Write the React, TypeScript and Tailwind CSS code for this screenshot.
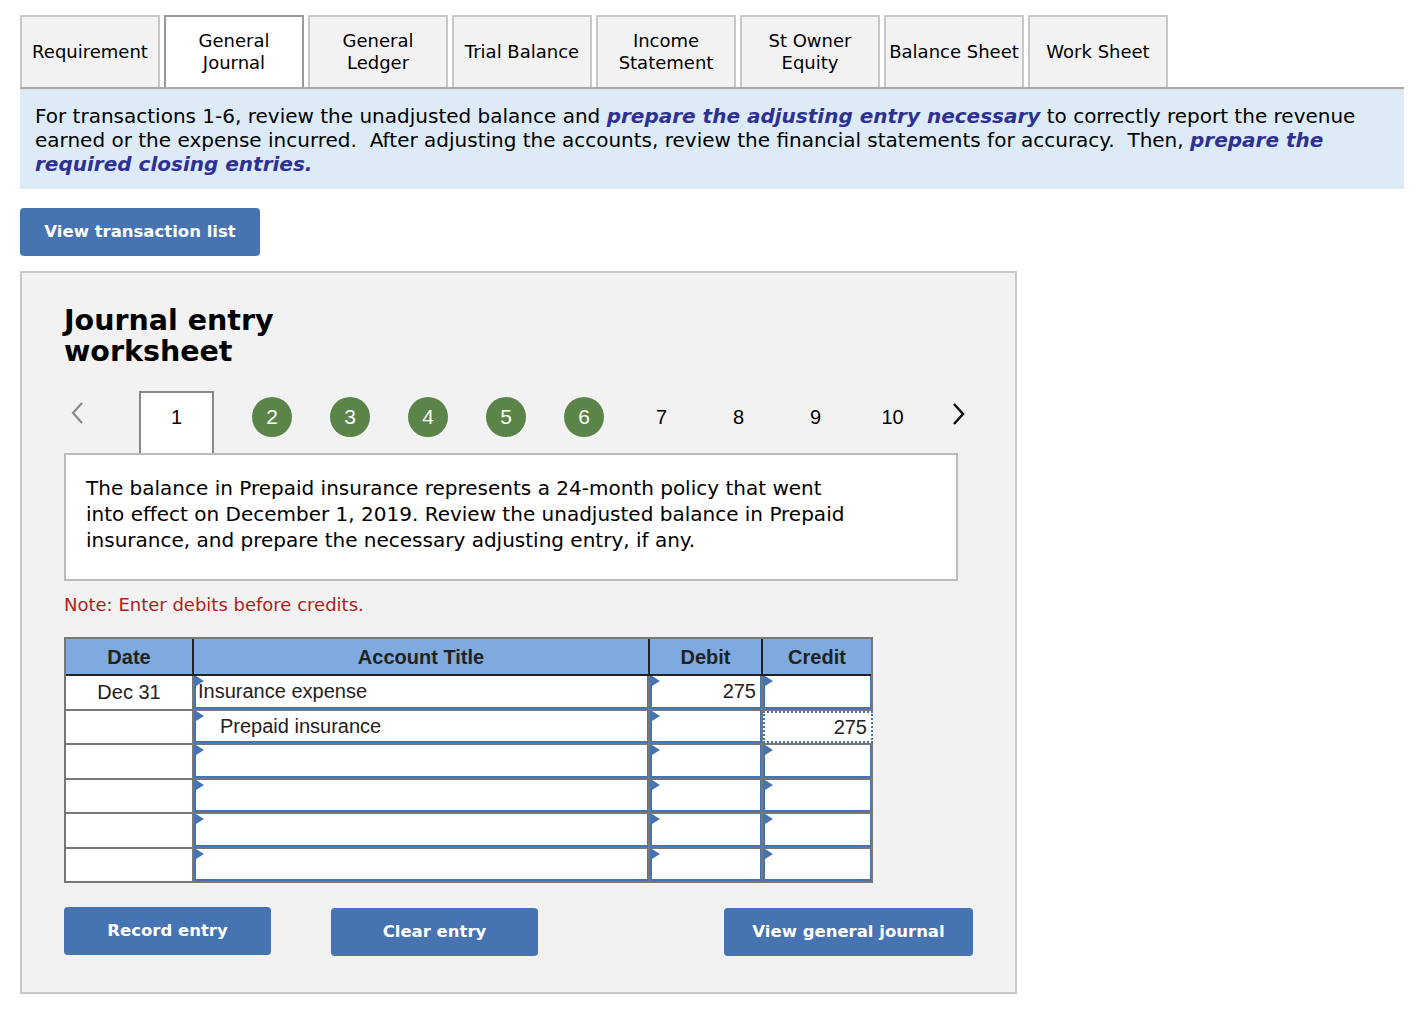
import { ReactNode } from 'react'

const tabs: { label: ReactNode; active?: boolean }[] = [
  { label: 'Requirement' },
  { label: <>General<br />Journal</>, active: true },
  { label: <>General<br />Ledger</> },
  { label: 'Trial Balance' },
  { label: <>Income<br />Statement</> },
  { label: <>St Owner<br />Equity</> },
  { label: 'Balance Sheet' },
  { label: 'Work Sheet' },
]

const rows = [
  { date: 'Dec 31', title: 'Insurance expense', debit: '275', credit: '' },
  { date: '', title: 'Prepaid insurance', indent: true, debit: '', credit: '275', focus: true },
  { date: '', title: '', debit: '', credit: '' },
  { date: '', title: '', debit: '', credit: '' },
  { date: '', title: '', debit: '', credit: '' },
  { date: '', title: '', debit: '', credit: '' },
]

const verdana = "font-['DejaVu_Sans',Verdana,sans-serif]"
const arial = "font-['Liberation_Sans',Arial,sans-serif]"

function Flag() {
  return (
    <svg className="absolute left-0 top-0" width="9" height="12" viewBox="0 0 9 12">
      <path d="M0 0 L8 5 L0 10 Z" fill="#4673b2" />
    </svg>
  )
}

function Cell({ value, align = 'left', indent, focus }: { value: string; align?: 'left' | 'right'; indent?: boolean; focus?: boolean }) {
  return (
    <div
      className={`relative h-[32.5px] bg-white flex items-center text-[20px] text-[#222] ${
        focus ? 'border-2 border-dotted border-[#4673b2] -mr-[2px]' : 'border-l-2 border-b-2 border-r border-[#4673b2]'
      } ${align === 'right' ? 'justify-end pr-1' : indent ? 'pl-[24px]' : 'pl-[2px]'}`}
    >
      {!focus && <Flag />}
      {value}
    </div>
  )
}

function Btn({ children, className = '' }: { children: ReactNode; className?: string }) {
  return (
    <button className={`h-12 rounded bg-[#4673b2] text-white font-bold text-[16.5px] ${verdana} ${className}`}>
      {children}
    </button>
  )
}

export default function App() {
  return (
    <div className={`min-h-[1014px] bg-white pl-5 pt-[15px] ${verdana}`}>
      <div className="w-[1384px]">
        <div className="flex gap-1">
          {tabs.map((t, i) => (
            <div
              key={i}
              className={`w-[140px] h-[72px] flex items-center justify-center text-center text-[18px] leading-[22px] text-black border-2 border-b-0 ${
                t.active ? 'bg-white border-[#999]' : 'bg-[#f2f2f2] border-[#c8c8c8]'
              }`}
            >
              {t.label}
            </div>
          ))}
        </div>
        <div className="border-t-2 border-[#a8a8a8] bg-[#ddebf7] px-[15px] pt-[15px] pb-[13px] text-[20px] leading-6 text-black">
          For transactions 1-6, review the unadjusted balance and{' '}
          <b className="italic text-[#2e3192]">prepare the adjusting entry necessary</b> to correctly report the revenue
          <br />
          earned or the expense incurred.&nbsp; After adjusting the accounts, review the financial statements for accuracy.&nbsp; Then,{' '}
          <b className="italic text-[#2e3192]">prepare the</b>
          <br />
          <b className="italic text-[#2e3192]">required closing entries.</b>
        </div>
      </div>

      <Btn className="mt-[19px] w-[240px]">View transaction list</Btn>

      <div className="mt-[15px] w-[997px] h-[723px] bg-[#f2f2f2] border-2 border-[#c8c8c8] pl-[42px] pt-[32px]">
        <h1 className="text-[28.5px] leading-[31px] font-bold text-black">
          Journal entry
          <br />
          worksheet
        </h1>

        <div className={`mt-[24px] flex items-end h-[62px] ${arial}`}>
          <div className="w-[75px] h-full flex items-center pl-[6px] pb-[18px]">
            <svg width="14" height="22" viewBox="0 0 14 22">
              <path d="M12 1 L3 11 L12 21" stroke="#888" strokeWidth="2.2" fill="none" />
            </svg>
          </div>
          <div className="w-[75px] h-full bg-white border-2 border-b-0 border-[#888] flex justify-center pt-[9px] text-[20px] text-black">
            1
          </div>
          <div className="flex items-center h-full pb-[10px] pl-[19px]">
            {[2, 3, 4, 5, 6].map((n) => (
              <div key={n} className="w-[78px] flex justify-center">
                <div className="w-10 h-10 rounded-full bg-[#5a8448] text-white text-[21px] flex items-center justify-center">
                  {n}
                </div>
              </div>
            ))}
            {[7, 8, 9, 10].map((n) => (
              <div key={n} className="w-[77px] text-center text-[20px] text-black">
                {n}
              </div>
            ))}
            <svg width="14" height="22" viewBox="0 0 14 22" className="ml-[21px] -mt-[6px]">
              <path d="M2 1 L11 11 L2 21" stroke="#111" strokeWidth="2.5" fill="none" />
            </svg>
          </div>
        </div>

        <div className="w-[894px] h-[128px] bg-white border-2 border-[#bbb] pl-[20px] pt-[20px] text-[20px] leading-[26px] text-black">
          The balance in Prepaid insurance represents a 24-month policy that went
          <br />
          into effect on December 1, 2019. Review the unadjusted balance in Prepaid
          <br />
          insurance, and prepare the necessary adjusting entry, if any.
        </div>

        <p className="mt-[10px] text-[18px] leading-[27px] text-[#b0201c]">Note: Enter debits before credits.</p>

        <div className={`mt-[19px] w-[809px] border-2 border-[#777] ${arial}`}>
          <div className="grid grid-cols-[126px_454px_111px_108px] gap-[2px] bg-[#222] border-b-2 border-[#222]">
            {['Date', 'Account Title', 'Debit', 'Credit'].map((h) => (
              <div key={h} className="h-[35px] bg-[#7faadf] flex items-center justify-center text-[20px] font-bold text-[#222]">
                {h}
              </div>
            ))}
          </div>
          <div className="grid grid-cols-[126px_454px_111px_108px] gap-[2px] bg-[#777]">
            {rows.map((r, i) => [
              <div key={`d${i}`} className="h-[32.5px] bg-white flex items-center justify-center text-[20px] text-[#222]">
                {r.date}
              </div>,
              <Cell key={`a${i}`} value={r.title} indent={r.indent} />,
              <Cell key={`b${i}`} value={r.debit} align="right" />,
              <Cell key={`c${i}`} value={r.credit} align="right" focus={r.focus} />,
            ])}
          </div>
        </div>

        <div className="mt-[24px] flex items-start">
          <Btn className="w-[207px]">Record entry</Btn>
          <Btn className="w-[207px] ml-[60px] mt-px">Clear entry</Btn>
          <Btn className="w-[249px] ml-[186px] mt-px">View general journal</Btn>
        </div>
      </div>
    </div>
  )
}
